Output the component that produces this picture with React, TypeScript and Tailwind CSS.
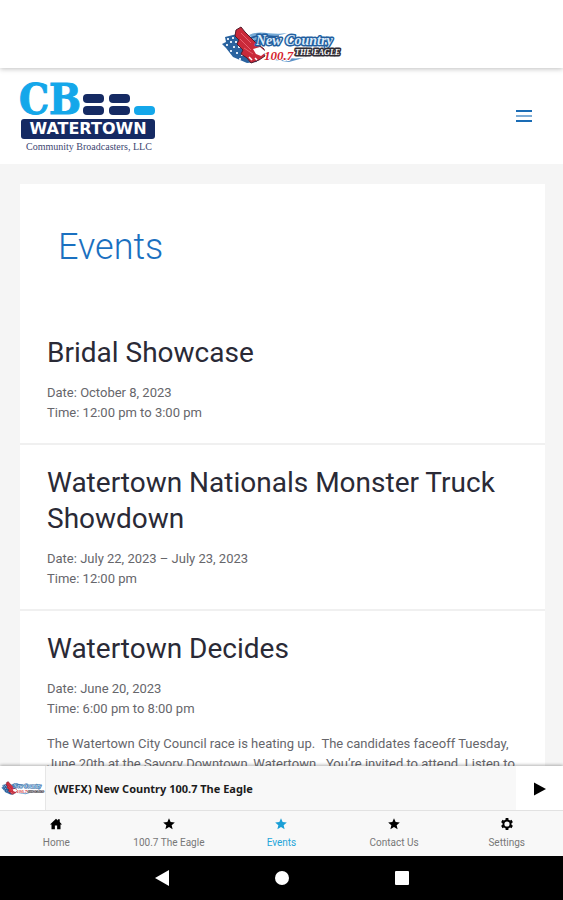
import type { ComponentType } from "react";
import { IoHomeSharp } from "react-icons/io5";
import { MdStar } from "react-icons/md";

type EventItem = {
  title: string;
  date: string;
  time: string;
  body?: string;
};

type TabItem = {
  label: string;
  icon: ComponentType<{ className?: string }>;
  active?: boolean;
};

const events: EventItem[] = [
  { title: "Bridal Showcase", date: "October 8, 2023", time: "12:00 pm to 3:00 pm" },
  { title: "Watertown Nationals Monster Truck Showdown", date: "July 22, 2023 – July 23, 2023", time: "12:00 pm" },
  {
    title: "Watertown Decides",
    date: "June 20, 2023",
    time: "6:00 pm to 8:00 pm",
    body: "The Watertown City Council race is heating up.\u00a0 The candidates faceoff Tuesday, June 20th at the Savory Downtown, Watertown.\u00a0 You’re invited to attend. Listen to",
  },
];

const tabs: TabItem[] = [
  { label: "Home", icon: HomeIcon },
  { label: "100.7 The Eagle", icon: MdStar },
  { label: "Events", icon: MdStar, active: true },
  { label: "Contact Us", icon: MdStar },
  { label: "Settings", icon: GearIcon },
];

function HomeIcon({ className }: { className?: string }) {
  return (
    <span className={`flex items-center justify-center ${className ?? ""}`}>
      <IoHomeSharp className="size-3" />
    </span>
  );
}

function GearIcon({ className }: { className?: string }) {
  return (
    <svg viewBox="0 0 14 14" className={className} fill="none" stroke="currentColor">
      <circle cx="7" cy="7" r="3.6" strokeWidth="2" />
      <path d="M7 1v2 M7 11v2 M1.8 4l1.7 1 M10.5 9l1.7 1 M1.8 10l1.7-1 M10.5 5l1.7-1" strokeWidth="2.8" />
    </svg>
  );
}

function EagleLogo({ className }: { className?: string }) {
  return (
    <svg viewBox="0 0 122 38" className={className} role="img" aria-label="New Country 100.7 The Eagle">
      {/* flag */}
      <path d="M4 11 L16 8 L34 26 L36 36 L26 37 L12 31 L5 22 L1 18 L5 16 Z" fill="#2a639f" />
      <path
        d="M6 12h2v2h-2z M11 11h2v2h-2z M9 15h2v2h-2z M14 15h2v2h-2z M5 18h2v2h-2z M12 20h2v2h-2z M17 20h2v2h-2z M9 24h2v2h-2z M15 26h2v2h-2z M20 28h2v2h-2z M18 32h2v2h-2z"
        fill="#dbe7f4"
      />
      {/* feathers */}
      <path d="M28 9 C42 3 48 10 66 7 C56 11 48 9 40 12 L56 13 L38 20 Z" fill="#74a9d6" />
      <path d="M30 12 C40 7 48 12 58 10 M32 16 C42 11 50 16 62 12" stroke="#235c9c" strokeWidth="1.5" fill="none" />
      <path d="M46 33 C58 29 72 35 86 31 L68 36 Z" fill="#5b93c8" />
      {/* eagle */}
      <path
        d="M15 4 L20 1 L24 6 L34 16 L43 23 L44 30 L38 34 L30 37 L26 32 L20 28 L22 24 L16 18 L18 14 L14 10 Z"
        fill="#c92a3a"
        stroke="#531c2c"
        strokeWidth="1"
      />
      <path d="M20 7 L30 17 M19 13 L30 24 M23 22 L32 28" stroke="#e8606e" strokeWidth="1" />
      <path d="M32 23 L39 21 L45 26 L40 30 L35 28 Z" fill="#fff" />
      <path d="M28 31 l3 3 M34 32 l2 2" stroke="#fff" strokeWidth="1.5" />
      {/* lettering */}
      <g fontStyle="italic" fontWeight="700" paintOrder="stroke" strokeLinejoin="round">
        <text x="35" y="19" fontSize="14" fontFamily="'Liberation Serif', serif" fill="#dcebfa" stroke="#245f9f" strokeWidth="3">
          New Country
        </text>
        <text x="43" y="34" fontSize="13" fontFamily="'Liberation Serif', serif" fill="#d51f30" stroke="#fff" strokeWidth="2">
          100.7
        </text>
        <text x="74" y="29" fontSize="8" fontFamily="'Liberation Serif', serif" fill="#fff" stroke="#302c34" strokeWidth="3">
          THE EAGLE
        </text>
      </g>
    </svg>
  );
}

function StationLogo() {
  return (
    <svg viewBox="0 0 136 74" className="h-[74px] w-[136px] overflow-visible" role="img" aria-label="CB Watertown Community Broadcasters, LLC">
      <g fill="#14a7ea" stroke="#14a7ea" strokeWidth="1" fontFamily="'DejaVu Serif Condensed', 'DejaVu Serif', serif" fontWeight="700" fontSize="42">
        <text x="-1" y="35">C</text>
        <text x="29" y="35">B</text>
      </g>
      <g fill="#152a63">
        <rect x="63" y="15" width="21" height="9" rx="4" />
        <rect x="63" y="27" width="21" height="9" rx="4" />
        <rect x="89" y="15" width="21" height="9" rx="4" />
        <rect x="89" y="27" width="21" height="9" rx="4" />
        <rect x="1" y="40" width="134" height="20" rx="3" />
      </g>
      <rect x="114" y="27" width="21" height="9" rx="4" fill="#14a7ea" />
      <text x="68" y="55" textAnchor="middle" fontSize="16" fontWeight="700" fontFamily="'DejaVu Sans', sans-serif" fill="#fff">
        WATERTOWN
      </text>
      <text x="69" y="71" textAnchor="middle" fontSize="10" fontFamily="'Liberation Serif', serif" fill="#3d4671">
        Community Broadcasters, LLC
      </text>
    </svg>
  );
}

function EventArticle({ event }: { event: EventItem }) {
  return (
    <article className="border-b-2 border-[#f0f0f0] px-[27px] pt-5 pb-5 text-[13px] leading-5 text-[#66666b]">
      <h2 className="mb-3 text-[28px] leading-9 font-normal text-[#2a2a36]">{event.title}</h2>
      <p>Date: {event.date}</p>
      <p>Time: {event.time}</p>
      {event.body ? <p className="mt-[15px]">{event.body}</p> : null}
    </article>
  );
}

export default function App() {
  return (
    <div className="flex h-screen flex-col overflow-hidden bg-[#f5f5f5] font-['Roboto',sans-serif]">
      <header className="z-10 flex h-[68px] shrink-0 items-end justify-center bg-white pb-1 shadow-[0_1px_5px_rgba(0,0,0,0.25)]">
        <EagleLogo className="h-[38px] w-[122px]" />
      </header>

      <main className="min-h-0 flex-1 overflow-hidden">
        <div className="flex h-24 items-center justify-between bg-white pr-[31px] pl-5">
          <StationLogo />
          <button type="button" aria-label="Menu" className="flex flex-col gap-[3px]">
            <span className="h-0.5 w-4 bg-[#1a6cb5]" />
            <span className="h-0.5 w-4 bg-[#7fadd6]" />
            <span className="h-0.5 w-4 bg-[#1a6cb5]" />
          </button>
        </div>

        <section className="mt-5 mr-[18px] ml-5 bg-white">
          <h1 className="px-[38px] pt-10 pb-11 text-[36px] leading-[47px] font-light text-[#1a70c0]">Events</h1>
          {events.map((event) => (
            <EventArticle key={event.title} event={event} />
          ))}
        </section>
      </main>

      <div className="z-10 flex h-11 shrink-0 items-stretch bg-[#f8f8f8] shadow-[0_-1px_3px_rgba(0,0,0,0.3)]">
        <div className="flex w-[46px] items-center justify-center border-r border-[#e6e6e6] bg-white">
          <EagleLogo className="h-[14px] w-11" />
        </div>
        <p className="flex flex-1 items-center pt-0.5 pl-2 font-['Noto_Sans',sans-serif] text-[11px] font-bold text-[#1c1c1c]">
          (WEFX) New Country 100.7 The Eagle
        </p>
        <button type="button" aria-label="Play" className="flex w-[47px] items-center justify-center bg-white pt-0.5">
          <svg viewBox="0 0 12 14" className="h-[14px] w-3">
            <path d="M0 0.5 L12 7 L0 13.5 Z" fill="#000" />
          </svg>
        </button>
      </div>

      <nav className="z-10 grid h-[46px] shrink-0 grid-cols-5 border-t border-[#e2e2e2] bg-[#f8f8f8]">
        {tabs.map(({ label, icon: Icon, active }) => (
          <a
            key={label}
            href="#"
            aria-current={active ? "page" : undefined}
            className={`flex flex-col items-center gap-1 pt-1.5 text-[10px] leading-4 ${active ? "text-[#25a5d8]" : "text-[#777]"}`}
          >
            <Icon className={active ? "size-[14px] text-[#1b9fd6]" : "size-[14px] text-black"} />
            {label}
          </a>
        ))}
      </nav>

      <div className="z-10 flex h-11 shrink-0 items-center justify-center bg-black text-white">
        <button type="button" aria-label="Back" className="flex w-[120px] justify-center">
          <svg viewBox="0 0 14 16" className="h-4 w-[14px]" fill="currentColor">
            <path d="M14 0 V16 L0 8 Z" />
          </svg>
        </button>
        <button type="button" aria-label="Home screen" className="flex w-[120px] justify-center">
          <span className="size-[14px] rounded-full bg-white" />
        </button>
        <button type="button" aria-label="Recent apps" className="flex w-[120px] justify-center">
          <span className="size-[14px] rounded-[1px] bg-white" />
        </button>
      </div>
    </div>
  );
}
